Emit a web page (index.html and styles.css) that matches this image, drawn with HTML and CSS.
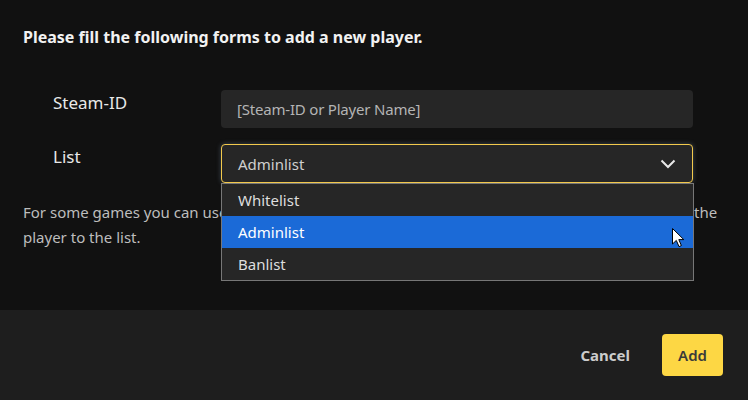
FILE: index.html
```html
<!DOCTYPE html>
<html>
<head>
<meta charset="utf-8">
<link rel="stylesheet" href="styles.css">
</head>
<body>
<div class="modal">
  <div class="modal-body">
    <h1 class="title">Please fill the following forms to add a new player.</h1>
    <div class="form">
      <div class="row">
        <label class="label">Steam-ID</label>
        <div class="input">[Steam-ID or Player Name]</div>
      </div>
      <div class="row">
        <label class="label">List</label>
        <div class="select-wrap">
          <div class="select">
            <span>Adminlist</span>
            <svg class="chevron" width="16" height="10" viewBox="0 0 16 10"><path d="M1.5 1.5 L8 8 L14.5 1.5" fill="none" stroke="#e8e8e8" stroke-width="2"/></svg>
          </div>
          <ul class="options">
            <li class="option">Whitelist</li>
            <li class="option active">Adminlist</li>
            <li class="option">Banlist</li>
          </ul>
          <svg class="cursor" width="14" height="20" viewBox="0 0 14 20"><path d="M0.5 0.5 L0.5 16 L4.3 12.4 L7 18.6 L9.4 17.6 L6.8 11.6 L11.8 11.6 Z" fill="#fff" stroke="#000" stroke-width="1"/></svg>
        </div>
      </div>
    </div>
    <p class="note">For some games you can use the list to give the new player special rights. Click on "Add" to add the player to the list.</p>
  </div>
  <div class="modal-footer">
    <button class="btn btn-cancel">Cancel</button>
    <button class="btn btn-add">Add</button>
  </div>
</div>
</body>
</html>
```

FILE: styles.css
```css
html, body {
  margin: 0;
  padding: 0;
  background: #111111;
  font-family: "Noto Sans", "Open Sans", sans-serif;
  color: #e0e0e0;
}
.modal {
  width: 748px;
  height: 400px;
  display: flex;
  flex-direction: column;
}
.modal-body {
  padding: 27px 23px 0 23px;
  height: 310px;
  box-sizing: border-box;
}
.title {
  margin: 0;
  font-size: 16px;
  line-height: 20px;
  font-weight: 700;
  color: #f2f2f2;
}
.form {
  margin-top: 43px;
  padding-left: 30px;
  display: flex;
  flex-direction: column;
  gap: 16px;
}
.row {
  display: grid;
  grid-template-columns: 168px 472px;
  align-items: start;
}
.label {
  font-size: 17px;
  line-height: 26px;
  color: #e8e8e8;
}
.input {
  height: 38px;
  box-sizing: border-box;
  background: #262626;
  border-radius: 4px;
  padding: 0 16px;
  display: flex;
  align-items: center;
  font-size: 15px;
  letter-spacing: -0.2px;
  color: #b4b4b4;
}
.select-wrap {
  position: relative;
}
.select {
  height: 39px;
  box-sizing: border-box;
  background: #262626;
  border: 1px solid #f2c94c;
  border-radius: 4px;
  box-shadow: 0 0 5px rgba(140, 170, 200, 0.35);
  padding: 0 16px;
  display: flex;
  align-items: center;
  justify-content: space-between;
  font-size: 15px;
  color: #cfcfcf;
}
.options {
  position: absolute;
  top: 39px;
  left: 0;
  width: 473px;
  box-sizing: border-box;
  margin: 0;
  padding: 0;
  list-style: none;
  background: #262626;
  border: 1px solid #777777;
  z-index: 2;
}
.option {
  height: 32px;
  line-height: 32px;
  padding-left: 16px;
  font-size: 15px;
  color: #dedede;
}
.option.active {
  background: #1b6ad7;
  color: #ffffff;
}
.cursor {
  position: absolute;
  left: 451px;
  top: 84px;
  z-index: 3;
}
.note {
  margin: 17px 0 0 0;
  font-size: 15px;
  line-height: 25px;
  color: #bdbdbd;
}
.modal-footer {
  flex: 1;
  background: #1e1e1e;
  display: flex;
  justify-content: flex-end;
  align-items: center;
  padding-right: 25px;
  gap: 16px;
}
.btn {
  font-family: inherit;
  border: none;
  font-size: 15px;
  font-weight: 700;
  height: 42px;
  border-radius: 4px;
  cursor: pointer;
}
.btn-cancel {
  background: transparent;
  color: #cccccc;
  padding: 0 16px;
}
.btn-add {
  background: #fdd744;
  color: #3a3a3a;
  width: 61px;
  font-weight: 600;
}
```
